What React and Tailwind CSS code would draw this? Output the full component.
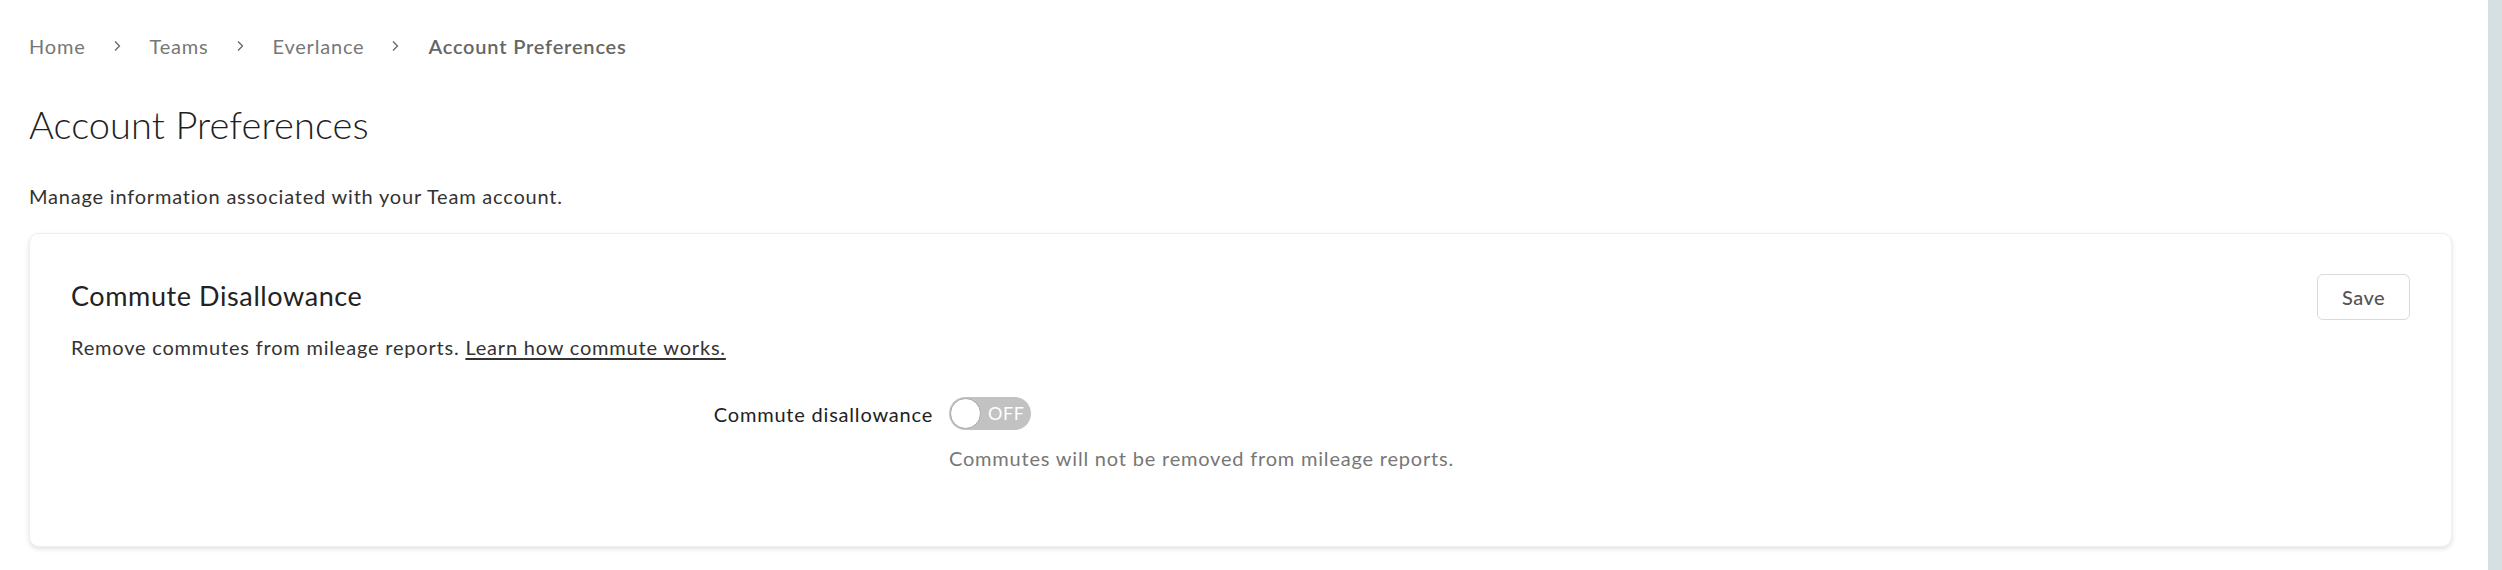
import React, { useState } from 'react';

const crumbs = ['Home', 'Teams', 'Everlance'];

function Chevron() {
  return (
    <svg width="8" height="12" viewBox="0 0 8 12" className="ml-[27px] mr-[29px]" aria-hidden="true">
      <path d="M2 1.5 6.5 6 2 10.5" fill="none" stroke="#666" strokeWidth="1.3" />
    </svg>
  );
}

function Toggle({ on, onChange }) {
  return (
    <button
      type="button"
      onClick={() => onChange(!on)}
      className="relative flex h-[33px] w-[82px] items-center rounded-full bg-[#c2c2c2]"
    >
      <span className="absolute left-[1px] top-[1px] h-[31px] w-[31px] rounded-full border border-[#a9a9a9] bg-white" />
      <span className="ml-[39px] text-[18px] tracking-[0.6px] text-white">{on ? 'ON' : 'OFF'}</span>
    </button>
  );
}

export default function App() {
  const [commuteOff, setCommuteOff] = useState(false);

  return (
    <div className="flex min-h-[570px] bg-white font-['Lato',sans-serif] text-[20px] tracking-[0.8px] text-[#222]">
      <main className="flex-1 pl-[29px] pr-[36px]">
        <nav className="flex h-[24px] mt-[34px] items-center leading-[24px] text-[#777]">
          {crumbs.map((c) => (
            <React.Fragment key={c}>
              <a href="#" className="hover:underline">{c}</a>
              <Chevron />
            </React.Fragment>
          ))}
          <span className="font-semibold text-[#666]">Account Preferences</span>
        </nav>

        <h1 className="mt-[42px] text-[38px] font-light leading-[48px] tracking-[0.1px] text-[#1e1e1e]">
          Account Preferences
        </h1>

        <p className="mt-[36px] leading-[24px] text-[#333]">
          Manage information associated with your Team account.
        </p>

        <section className="mt-[25px] h-[314px] rounded-[10px] border border-[#efefef] bg-white px-[41px] pt-[40px] shadow-[0_2px_5px_rgba(0,0,0,0.12)]">
          <div className="flex items-start justify-between">
            <h2 className="mt-[6px] text-[27px] leading-[32px] tracking-[0.6px] text-[#222]">Commute Disallowance</h2>
            <button
              type="button"
              className="h-[46px] w-[93px] rounded-[6px] border border-[#dadada] font-medium tracking-[0.4px] text-[#555]"
            >
              Save
            </button>
          </div>

          <p className="mt-[15px] leading-[24px] text-[#333]">
            Remove commutes from mileage reports.{' '}
            <a href="#" className="underline decoration-[1.5px] underline-offset-[3px]">
              Learn how commute works.
            </a>
          </p>

          <div className="mt-[38px] grid grid-cols-[862px_1fr] gap-x-[16px] gap-y-[16px]">
            <label className="flex h-[33px] items-center justify-end text-[#222]">
              Commute disallowance
            </label>
            <div>
              <Toggle on={commuteOff} onChange={setCommuteOff} />
            </div>
            <div />
            <p className="leading-[24px] text-[#777]">
              Commutes will not be removed from mileage reports.
            </p>
          </div>
        </section>
      </main>
      <div className="w-[14px] bg-[#d6dfe2]" />
    </div>
  );
}
